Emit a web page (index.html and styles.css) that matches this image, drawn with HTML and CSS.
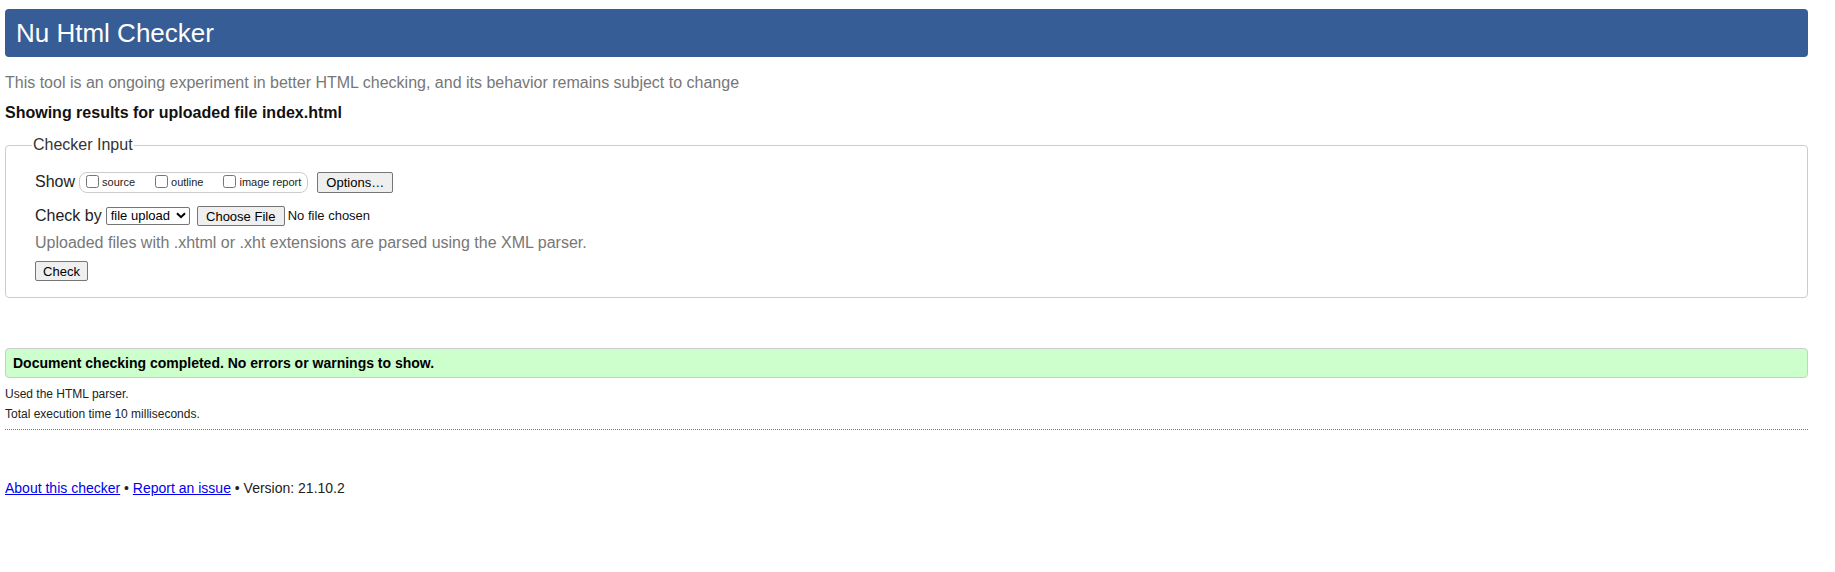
FILE: index.html
```html
<!DOCTYPE html>
<html lang="en">
<head>
<meta charset="utf-8">
<title>Nu Html Checker</title>
<link rel="stylesheet" href="styles.css">
</head>
<body>
<header class="banner"><h1 class="banner-title">Nu Html Checker</h1></header>
<p class="intro">This tool is an ongoing experiment in better HTML checking, and its behavior remains subject to change</p>
<p class="showing">Showing results for uploaded file index.html</p>
<form class="checker-form">
  <fieldset class="checker-input">
    <legend class="checker-legend">Checker Input</legend>
    <div class="row row-show">
      <span class="row-label">Show</span>
      <span class="show-group">
        <label class="opt"><input type="checkbox" class="cb">source</label>
        <label class="opt"><input type="checkbox" class="cb">outline</label>
        <label class="opt"><input type="checkbox" class="cb">image report</label>
      </span>
      <button type="button" class="btn btn-options">Options…</button>
    </div>
    <div class="row row-checkby">
      <span class="row-label">Check by</span>
      <span class="select">file upload<svg class="chev" width="10" height="7" viewBox="0 0 10 7"><path d="M1 1.2 5 5.2 9 1.2" fill="none" stroke="#000" stroke-width="2"/></svg></span>
      <button type="button" class="btn btn-file">Choose File</button>
      <span class="nofile">No file chosen</span>
    </div>
    <p class="hint">Uploaded files with .xhtml or .xht extensions are parsed using the XML parser.</p>
    <div class="row row-submit"><button type="button" class="btn btn-check">Check</button></div>
  </fieldset>
</form>
<div class="success"><p class="success-text">Document checking completed. No errors or warnings to show.</p></div>
<p class="details details-first">Used the HTML parser.</p>
<p class="details">Total execution time 10 milliseconds.</p>
<hr class="sep">
<p class="footer"><a href="#" class="flink">About this checker</a> • <a href="#" class="flink">Report an issue</a> • Version: 21.10.2</p>
</body>
</html>
```
FILE: styles.css
```css
html, body {
  background: #fff;
}
body {
  margin: 0;
  padding: 9px 27px 0 5px;
  font-family: "Liberation Sans", Arial, sans-serif;
  color: #222;
}
.banner {
  background: #365d95;
  border-radius: 4px;
  height: 48px;
  display: flex;
  align-items: center;
  padding-left: 11px;
}
.banner-title {
  margin: 0;
  font-size: 26px;
  font-weight: normal;
  color: #fff;
  line-height: 30px;
}
.intro {
  margin: 17px 0 0;
  font-size: 16px;
  line-height: 18px;
  color: #777;
}
.showing {
  margin: 12px 0 0;
  font-size: 16px;
  line-height: 18px;
  font-weight: bold;
  color: #111;
}
.checker-form {
  margin: 14px 0 0;
}
.checker-input {
  margin: 0;
  border: 1px solid #ccc;
  border-radius: 4px;
  padding: 0 29px 16px 29px;
}
.checker-legend {
  font-size: 16px;
  line-height: 18px;
  padding: 0 1px;
  margin-left: -3px;
  color: #333;
}
.row {
  display: flex;
  align-items: center;
}
.row-show {
  margin-top: 17px;
  height: 22px;
}
.row-label {
  font-size: 16px;
  color: #222;
  margin-right: 3px;
}
.show-group {
  display: flex;
  align-items: center;
  height: 19px;
  border: 1px solid #ccc;
  border-radius: 8px;
  padding: 0 6px 0 2px;
  margin-left: 1px;
}
.opt {
  display: flex;
  align-items: center;
  font-size: 11px;
  color: #222;
  margin-right: 16px;
}
.opt:last-child {
  margin-right: 0;
}
.cb {
  width: 13px;
  height: 13px;
  margin: 0 3px 2px 4px;
}
.btn {
  font-family: "Liberation Sans", Arial, sans-serif;
  font-size: 13px;
  color: #000;
  background: #efefef;
  border: 1px solid #767676;
  border-radius: 2px;
  padding: 0 6px;
  height: 21px;
  line-height: 19px;
}
.btn-options {
  margin-left: 9px;
  width: 76px;
}
.row-checkby {
  margin-top: 12px;
  height: 21px;
}
.select {
  display: inline-flex;
  align-items: center;
  justify-content: space-between;
  box-sizing: border-box;
  width: 84px;
  height: 18px;
  border: 1px solid #767676;
  border-radius: 2px;
  font-size: 13px;
  padding: 0 3px 0 4px;
  color: #000;
  margin-left: 1px;
}
.chev {
  display: block;
}
.btn-file {
  margin-left: 7px;
  width: 88px;
  height: 20px;
}
.nofile {
  font-size: 13px;
  color: #111;
  margin-left: 3px;
}
.hint {
  margin: 8px 0 0;
  font-size: 16px;
  line-height: 18px;
  color: #777;
}
.row-submit {
  margin-top: 9px;
}
.btn-check {
  width: 53px;
  height: 20px;
  padding: 0;
}
.success {
  margin-top: 50px;
  box-sizing: border-box;
  height: 30px;
  background: #ccffcc;
  border: 1px solid #ccc;
  border-radius: 4px;
  display: flex;
  align-items: center;
  padding-left: 7px;
}
.success-text {
  margin: 0;
  font-size: 14px;
  font-weight: bold;
  color: #000;
}
.details {
  margin: 0;
  font-size: 12px;
  line-height: 20px;
  color: #222;
}
.details-first {
  margin-top: 6px;
}
.sep {
  margin: 5px 0 0;
  border: 0;
  border-top: 1px dotted #777;
  height: 0;
}
.footer {
  margin: 50px 0 0;
  font-size: 14px;
  line-height: 16px;
  color: #222;
}
.flink {
  color: #00e;
  text-decoration: underline;
}
```
